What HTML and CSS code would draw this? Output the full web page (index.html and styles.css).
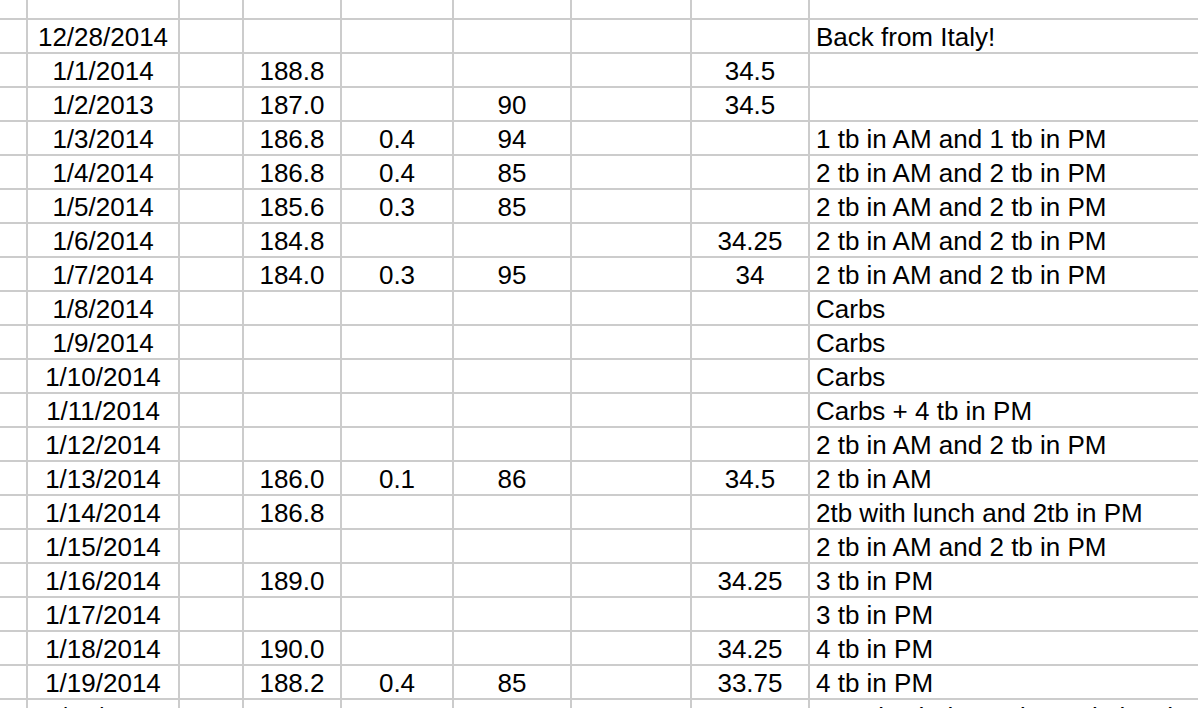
FILE: index.html
```html
<!DOCTYPE html>
<html>
<head>
<meta charset="utf-8">
<link rel="stylesheet" href="styles.css">
</head>
<body>
<div class="sheet">
  <div class="row top"><div></div><div></div><div></div><div></div><div></div><div></div><div></div><div></div><div></div></div>
  <div class="row"><div></div><div class="c">12/28/2014</div><div></div><div></div><div></div><div></div><div></div><div></div><div class="n">Back from Italy!</div></div>
  <div class="row"><div></div><div class="c">1/1/2014</div><div></div><div class="c">188.8</div><div></div><div></div><div></div><div class="c">34.5</div><div class="n"></div></div>
  <div class="row"><div></div><div class="c">1/2/2013</div><div></div><div class="c">187.0</div><div></div><div class="c">90</div><div></div><div class="c">34.5</div><div class="n"></div></div>
  <div class="row"><div></div><div class="c">1/3/2014</div><div></div><div class="c">186.8</div><div class="c">0.4</div><div class="c">94</div><div></div><div></div><div class="n">1 tb in AM and 1 tb in PM</div></div>
  <div class="row"><div></div><div class="c">1/4/2014</div><div></div><div class="c">186.8</div><div class="c">0.4</div><div class="c">85</div><div></div><div></div><div class="n">2 tb in AM and 2 tb in PM</div></div>
  <div class="row"><div></div><div class="c">1/5/2014</div><div></div><div class="c">185.6</div><div class="c">0.3</div><div class="c">85</div><div></div><div></div><div class="n">2 tb in AM and 2 tb in PM</div></div>
  <div class="row"><div></div><div class="c">1/6/2014</div><div></div><div class="c">184.8</div><div></div><div></div><div></div><div class="c">34.25</div><div class="n">2 tb in AM and 2 tb in PM</div></div>
  <div class="row"><div></div><div class="c">1/7/2014</div><div></div><div class="c">184.0</div><div class="c">0.3</div><div class="c">95</div><div></div><div class="c">34</div><div class="n">2 tb in AM and 2 tb in PM</div></div>
  <div class="row"><div></div><div class="c">1/8/2014</div><div></div><div></div><div></div><div></div><div></div><div></div><div class="n">Carbs</div></div>
  <div class="row"><div></div><div class="c">1/9/2014</div><div></div><div></div><div></div><div></div><div></div><div></div><div class="n">Carbs</div></div>
  <div class="row"><div></div><div class="c">1/10/2014</div><div></div><div></div><div></div><div></div><div></div><div></div><div class="n">Carbs</div></div>
  <div class="row"><div></div><div class="c">1/11/2014</div><div></div><div></div><div></div><div></div><div></div><div></div><div class="n">Carbs + 4 tb in PM</div></div>
  <div class="row"><div></div><div class="c">1/12/2014</div><div></div><div></div><div></div><div></div><div></div><div></div><div class="n">2 tb in AM and 2 tb in PM</div></div>
  <div class="row"><div></div><div class="c">1/13/2014</div><div></div><div class="c">186.0</div><div class="c">0.1</div><div class="c">86</div><div></div><div class="c">34.5</div><div class="n">2 tb in AM</div></div>
  <div class="row"><div></div><div class="c">1/14/2014</div><div></div><div class="c">186.8</div><div></div><div></div><div></div><div></div><div class="n">2tb with lunch and 2tb in PM</div></div>
  <div class="row"><div></div><div class="c">1/15/2014</div><div></div><div></div><div></div><div></div><div></div><div></div><div class="n">2 tb in AM and 2 tb in PM</div></div>
  <div class="row"><div></div><div class="c">1/16/2014</div><div></div><div class="c">189.0</div><div></div><div></div><div></div><div class="c">34.25</div><div class="n">3 tb in PM</div></div>
  <div class="row"><div></div><div class="c">1/17/2014</div><div></div><div></div><div></div><div></div><div></div><div></div><div class="n">3 tb in PM</div></div>
  <div class="row"><div></div><div class="c">1/18/2014</div><div></div><div class="c">190.0</div><div></div><div></div><div></div><div class="c">34.25</div><div class="n">4 tb in PM</div></div>
  <div class="row"><div></div><div class="c">1/19/2014</div><div></div><div class="c">188.2</div><div class="c">0.4</div><div class="c">85</div><div></div><div class="c">33.75</div><div class="n">4 tb in PM</div></div>
  <div class="row"><div></div><div class="c">1/20/2014</div><div></div><div></div><div class="c">0.4</div><div class="c">88</div><div></div><div></div><div class="n">Protein shake and protein lunch</div></div>
</div>
</body>
</html>
```
FILE: styles.css
```css
html, body {
  margin: 0;
  padding: 0;
  background: #fff;
  overflow: hidden;
}
body {
  width: 1198px;
  height: 708px;
}
.sheet {
  display: flex;
  flex-direction: column;
  gap: 2px;
  background: #cccccc;
  font-family: "Liberation Sans", Arial, sans-serif;
  font-size: 26px;
  color: #000;
}
.row {
  display: grid;
  grid-template-columns: 26px 150px 62px 96px 110px 116px 118px 116px 1fr;
  gap: 2px;
  height: 32px;
  flex: none;
}
.row.top {
  height: 18px;
}
.row > div {
  background: #fff;
  line-height: 32px;
  padding-top: 1px;
  white-space: nowrap;
  overflow: hidden;
}
.c {
  text-align: center;
}
.n {
  text-align: left;
  padding-left: 6px;
}
```
